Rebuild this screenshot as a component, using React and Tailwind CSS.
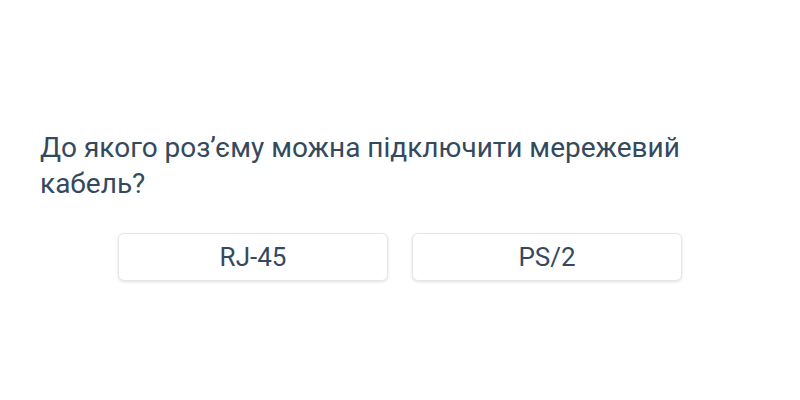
import React from "react";

const options = ["RJ-45", "PS/2"];

export default function App() {
  return (
    <div
      className="w-[800px] h-[400px] bg-white flex flex-col justify-center px-10 pt-[11px] text-[#34495e]"
      style={{ fontFamily: "Roboto, sans-serif" }}
    >
      <p className="text-[28px] leading-[36px]">
        До якого роз’єму можна підключити мережевий кабель?
      </p>
      <div className="flex justify-center gap-6 mt-[31px]">
        {options.map((opt) => (
          <button
            key={opt}
            className="w-[270px] h-[48px] bg-white border border-[#e6e6e6] rounded-md shadow-[0_1px_3px_rgba(0,0,0,0.12)] text-[26px] text-[#34495e]"
          >
            {opt}
          </button>
        ))}
      </div>
    </div>
  );
}
